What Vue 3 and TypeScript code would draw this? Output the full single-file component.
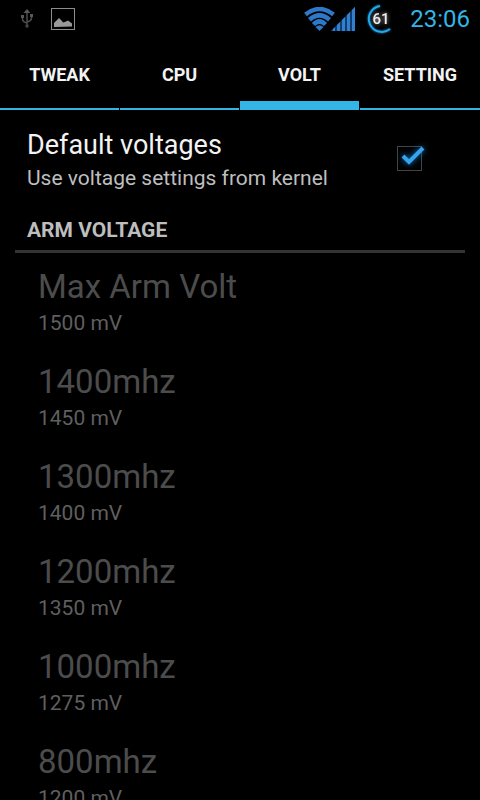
<script setup lang="ts">
import { ref } from 'vue'

interface VoltageStep {
  label: string
  millivolts: number
}

const tabs: string[] = ['TWEAK', 'CPU', 'VOLT', 'SETTING']
const activeTab = ref<string>('VOLT')
const useDefaults = ref<boolean>(true)

const steps: VoltageStep[] = [
  { label: 'Max Arm Volt', millivolts: 1500 },
  { label: '1400mhz', millivolts: 1450 },
  { label: '1300mhz', millivolts: 1400 },
  { label: '1200mhz', millivolts: 1350 },
  { label: '1000mhz', millivolts: 1275 },
  { label: '800mhz', millivolts: 1200 },
]
</script>

<template>
  <div class="screen">
    <header class="status">
      <div class="notices">
        <svg class="usb" viewBox="0 0 12 20" aria-hidden="true">
          <path d="M6 2V17M1.500 7v3q0 3 4.500 4M10.500 6v3q0 3-4.500 4" fill="none" stroke="#4c4c4c" stroke-width="1.500" />
          <path d="M6 0l3.500 4h-7zM0 6h3v3H0zM9 5h3v3H9z" fill="#585858" />
          <circle cx="6" cy="17" r="1.800" fill="#444" />
        </svg>
        <svg class="picture" viewBox="0 0 24 22" aria-hidden="true">
          <rect x="0.5" y="0.5" width="23" height="21" fill="none" stroke="#8c8c8c" />
          <path d="M3 19v-4l2-2 3-3 3 3 1 1.500 3-1 2-1 2 1.500 2 1.500v3z" fill="#999" />
        </svg>
      </div>
      <svg class="wifi" viewBox="0 0 31 24" aria-hidden="true">
        <g fill="none" stroke="#2d78c8" stroke-width="4.500">
          <path d="M1.500 7.500Q15.500-3.500 29.500 7.500" />
          <path d="M5.500 12.800Q15.500 4 25.500 12.800" />
          <path d="M9.500 17.500Q15.500 11.500 21.500 17.500" />
        </g>
        <path d="M11.500 20Q15.500 16.500 19.500 20L15.500 24z" fill="#2d78c8" />
      </svg>
      <svg class="signal" viewBox="0 0 24 24" aria-hidden="true">
        <path d="M0 24L24 0V24z" fill="#2161a6" />
        <path d="M2 24v-2l2-2v4zM6 24v-6l3-3v9zM11 24V13l3-3v14zM16 24V8l3-3v19zM21 24V3l3-3v24z" fill="#2f80d2" />
        <path d="M5 24v-6M10 24V12M15 24V7M20 24V2" stroke="#06182b" stroke-width="1" />
      </svg>
      <svg class="battery" viewBox="0 0 32 34" aria-hidden="true">
        <path class="ring" d="M16 4A13 13 0 1 0 26 27" />
        <text x="17" y="22">61</text>
      </svg>
      <time class="clock">23:06</time>
    </header>

    <nav class="tabs">
      <button
        v-for="tab in tabs"
        :key="tab"
        type="button"
        class="tab"
        :class="{ active: tab === activeTab }"
        @click="activeTab = tab"
      >
        {{ tab }}
      </button>
    </nav>

    <main class="content">
      <label class="preference">
        <span class="words">
          <span class="title">Default voltages</span>
          <span class="summary">Use voltage settings from kernel</span>
        </span>
        <span class="check">
          <input v-model="useDefaults" type="checkbox" />
          <svg v-if="useDefaults" class="tick" viewBox="0 0 36 32" aria-hidden="true">
            <path d="M9 13l6 6L29 5" />
          </svg>
        </span>
      </label>

      <h2 class="section">ARM VOLTAGE</h2>

      <ul class="steps" :class="{ disabled: useDefaults }">
        <li v-for="step in steps" :key="step.label" class="step">
          <span class="name">{{ step.label }}</span>
          <span class="value">{{ step.millivolts }} mV</span>
        </li>
      </ul>
    </main>
  </div>
</template>

<style>
body {
  margin: 0;
  background: #000;
}
</style>

<style scoped>
.screen {
  display: flex;
  flex-direction: column;
  height: 100vh;
  background: #000;
  color: #f3f3f3;
  font-family: Roboto, 'Liberation Sans', sans-serif;
}

.status {
  display: flex;
  flex: none;
  align-items: center;
  height: 38px;
  padding: 0 10px 0 21px;
}

.notices {
  display: flex;
  flex: 1;
  align-items: center;
  gap: 18px;
}

.usb {
  width: 12px;
  height: 20px;
}

.picture {
  width: 24px;
  height: 22px;
}

.wifi {
  width: 31px;
  height: 24px;
}

.signal {
  width: 24px;
  height: 24px;
  margin-right: 9px;
  margin-left: -4px;
}

.battery {
  width: 32px;
  height: 34px;
  margin-right: 14px;
}

.ring {
  fill: none;
  stroke: #22a7e8;
  stroke-width: 2;
  filter: drop-shadow(0 0 1px #0a8be0);
}

.battery text {
  fill: #eee;
  font-size: 15px;
  font-weight: 500;
  text-anchor: middle;
  filter: drop-shadow(0 0 2px #aaa);
}

.clock {
  color: #33b5e5;
  font-size: 24px;
  line-height: 32px;
}

.tabs {
  display: grid;
  flex: none;
  grid-template-columns: repeat(4, 1fr);
  height: 72px;
}

.tab {
  margin: 0 1px 0 0;
  padding: 4px 0 0;
  border: 0;
  border-bottom: 2px solid #33b5e5;
  background: none;
  color: #f3f3f3;
  font: 700 18px/66px Roboto, 'Liberation Sans', sans-serif;
}

.tab:last-child {
  margin-right: 0;
}

.tab.active {
  box-shadow: inset 0 -7px #33b5e5;
}

.content {
  flex: 1;
  min-height: 0;
  padding: 0 15px;
  overflow-y: auto;
  scrollbar-width: none;
}

.preference {
  display: flex;
  align-items: center;
  justify-content: space-between;
  padding: 19px 36px 0 12px;
}

.words {
  display: flex;
  flex-direction: column;
  gap: 1px;
}

.title {
  font-size: 27px;
  line-height: 32px;
}

.summary {
  color: #bebebe;
  font-size: 21px;
  line-height: 32px;
}

.check {
  position: relative;
  display: flex;
  align-items: flex-start;
  width: 32px;
  height: 31px;
}

.check input {
  width: 25px;
  height: 25px;
  margin: 0;
  border: 1px solid #444;
  appearance: none;
}

.tick {
  position: absolute;
  top: -3px;
  left: -3px;
  width: 36px;
  height: 32px;
  fill: none;
  stroke: #35a4ee;
  stroke-width: 4;
  filter: drop-shadow(0 0 3px #0878c8);
  overflow: visible;
  pointer-events: none;
}

.section {
  margin: 0;
  padding: 24px 12px 8px;
  border-bottom: 3px solid #333;
  color: #bebebe;
  font-size: 21px;
  font-weight: 700;
  line-height: 24px;
}

.steps {
  margin: 0;
  padding: 0;
  list-style: none;
}

.step {
  display: flex;
  flex-direction: column;
  gap: 3px;
  padding: 14px 23px 12px;
}

.name {
  font-size: 33px;
  line-height: 40px;
}

.value {
  color: #bebebe;
  font-size: 21px;
  line-height: 26px;
}

.disabled .name {
  color: #4c4c4c;
}

.disabled .value {
  color: #5f5f5f;
}
</style>
